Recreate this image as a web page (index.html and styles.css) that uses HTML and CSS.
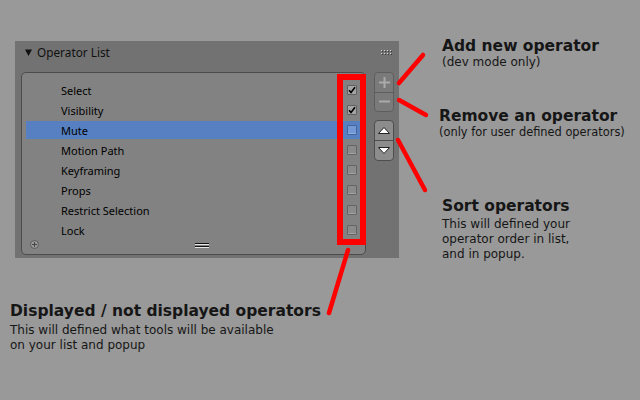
FILE: index.html
```html
<!DOCTYPE html>
<html>
<head>
<meta charset="utf-8">
<link rel="stylesheet" href="styles.css">
</head>
<body>
<div class="canvas">
  <div class="left">
    <section class="panel">
      <header class="panel-head">
        <svg class="tri" width="7" height="7" viewBox="0 0 7 7"><polygon points="0,0.5 7,0.5 3.5,7" fill="#111"/></svg>
        <span class="panel-title">Operator List</span>
        <svg class="grip-dots" width="12" height="5" viewBox="0 0 12 5">
          <g fill="#3a3a3a"><rect x="1" y="1" width="1" height="1"/><rect x="4" y="1" width="1" height="1"/><rect x="7" y="1" width="1" height="1"/><rect x="10" y="1" width="1" height="1"/><rect x="1" y="4" width="1" height="1"/><rect x="4" y="4" width="1" height="1"/><rect x="7" y="4" width="1" height="1"/><rect x="10" y="4" width="1" height="1"/></g>
          <g fill="#d8d8d8"><rect x="0" y="0" width="1" height="1"/><rect x="3" y="0" width="1" height="1"/><rect x="6" y="0" width="1" height="1"/><rect x="9" y="0" width="1" height="1"/><rect x="0" y="3" width="1" height="1"/><rect x="3" y="3" width="1" height="1"/><rect x="6" y="3" width="1" height="1"/><rect x="9" y="3" width="1" height="1"/></g>
        </svg>
      </header>
      <div class="panel-body">
        <div class="list">
          <ul class="rows">
            <li class="row"><span class="label">Select</span><span class="cb checked"><svg width="8" height="8" viewBox="0 0 8 8"><path d="M1 4.2 L3 6.4 L7 1.2" fill="none" stroke="#000" stroke-width="1.6"/></svg></span></li>
            <li class="row"><span class="label">Visibility</span><span class="cb checked"><svg width="8" height="8" viewBox="0 0 8 8"><path d="M1 4.2 L3 6.4 L7 1.2" fill="none" stroke="#000" stroke-width="1.6"/></svg></span></li>
            <li class="row active"><span class="label">Mute</span><span class="cb"></span></li>
            <li class="row"><span class="label">Motion Path</span><span class="cb"></span></li>
            <li class="row"><span class="label">Keyframing</span><span class="cb"></span></li>
            <li class="row"><span class="label">Props</span><span class="cb"></span></li>
            <li class="row"><span class="label">Restrict Selection</span><span class="cb"></span></li>
            <li class="row"><span class="label">Lock</span><span class="cb"></span></li>
          </ul>
          <div class="list-foot">
            <svg class="add-icon" width="9" height="9" viewBox="0 0 9 9"><circle cx="4.5" cy="4.5" r="4" fill="#9a9a9a" stroke="#5c5c5c"/><path d="M4.5 2 V7 M2 4.5 H7" stroke="#444" stroke-width="1"/></svg>
            <svg class="resize-grip" width="14" height="5" viewBox="0 0 14 5"><rect x="0" y="0" width="14" height="1" fill="#111"/><rect x="0" y="1" width="14" height="1" fill="#e6e6e6"/><rect x="0" y="3" width="14" height="1" fill="#111"/><rect x="0" y="4" width="14" height="1" fill="#e6e6e6"/></svg>
          </div>
        </div>
        <div class="side">
          <div class="btn-group flat">
            <div class="btn"><svg width="11" height="11" viewBox="0 0 11 11"><path d="M5.5 0 V11 M0 5.5 H11" stroke="#aaaaaa" stroke-width="2"/></svg></div>
            <div class="btn"><svg width="11" height="11" viewBox="0 0 11 11"><path d="M0 5.5 H11" stroke="#aaaaaa" stroke-width="2"/></svg></div>
          </div>
          <div class="btn-group raised">
            <div class="btn"><svg width="12" height="7" viewBox="0 0 12 7"><polygon points="6,0.5 11.5,6.5 0.5,6.5" fill="#fff" stroke="#222" stroke-width="1"/></svg></div>
            <div class="btn"><svg width="12" height="7" viewBox="0 0 12 7"><polygon points="0.5,0.5 11.5,0.5 6,6.5" fill="#fff" stroke="#222" stroke-width="1"/></svg></div>
          </div>
        </div>
      </div>
    </section>
    <div class="note note-display">
      <div class="note-title">Displayed / not displayed operators</div>
      <div class="note-text">This will defined what tools will be available<br>on your list and popup</div>
    </div>
  </div>
  <div class="right">
    <div class="note note-add">
      <div class="note-title">Add new operator</div>
      <div class="note-text">(dev mode only)</div>
    </div>
    <div class="note note-remove">
      <div class="note-title">Remove an operator</div>
      <div class="note-text">(only for user defined operators)</div>
    </div>
    <div class="note note-sort">
      <div class="note-title">Sort operators</div>
      <div class="note-text">This will defined your<br>operator order in list,<br>and in popup.</div>
    </div>
  </div>
  <svg class="marks" width="640" height="400" viewBox="0 0 640 400">
    <g fill="none" stroke="#ff0000" stroke-linecap="round">
      <rect x="340" y="77" width="23" height="165" stroke-width="6" stroke-linecap="butt"/>
      <path d="M399 83 L423 55" stroke-width="4.5"/>
      <path d="M399 100 L426 115" stroke-width="4.5"/>
      <path d="M398 140 L425 190" stroke-width="4.5"/>
      <path d="M348 250 L329 313" stroke-width="4.5"/>
    </g>
  </svg>
</div>
</body>
</html>
```
FILE: styles.css
```css
html, body {
  margin: 0;
  padding: 0;
  background: #999999;
}

.canvas {
  position: relative;
  width: 640px;
  height: 400px;
  display: flex;
  overflow: hidden;
}

.left {
  padding: 41px 0 0 15px;
  width: 384px;
  flex: none;
}

.panel {
  width: 384px;
  height: 217px;
  background: #727272;
  display: flex;
  flex-direction: column;
}

.panel-head {
  height: 22px;
  display: flex;
  align-items: center;
  padding: 0 6px 0 10px;
  flex: none;
}

.tri {
  display: block;
  margin-right: 5px;
}

.panel-title {
  font-family: "Noto Sans", sans-serif;
  font-size: 11.8px;
  line-height: 22px;
  color: #111;
}

.grip-dots {
  display: block;
  margin-left: auto;
}

.panel-body {
  flex: 1;
  display: flex;
  gap: 8px;
  padding: 9px 5px 3px 6px;
}

.list {
  width: 345px;
  box-sizing: border-box;
  border: 1px solid #4c4c4c;
  border-radius: 5px;
  background: #828282;
  padding: 8px 5px 0 4px;
  display: flex;
  flex-direction: column;
}

.rows {
  list-style: none;
  margin: 0;
  padding: 0;
  display: flex;
  flex-direction: column;
  gap: 2px;
}

.row {
  height: 18px;
  display: flex;
  align-items: center;
  padding: 0 3px 0 35px;
  font-family: "Noto Sans", sans-serif;
  font-size: 11px;
  color: #000;
}

.row.active {
  background: #5680c2;
}

.label {
  flex: 1;
}

.cb {
  width: 10px;
  height: 10px;
  box-sizing: border-box;
  border: 1px solid #646464;
  border-radius: 1px;
  background: #8a8a8a;
  box-shadow: inset 0 -1px 0 #a3a3a3;
  display: flex;
  align-items: center;
  justify-content: center;
}

.cb svg {
  display: block;
}

.cb.checked {
  background: #a4a4a4;
  border-color: #606060;
  box-shadow: none;
}

.row.active .cb {
  background: #7398d6;
  border-color: #45649a;
  box-shadow: inset 0 -1px 0 #8eaee2;
}

.list-foot {
  display: flex;
  align-items: flex-start;
  padding: 1px 0 0 4px;
}

.add-icon {
  display: block;
}

.resize-grip {
  display: block;
  margin: 3px 0 0 156px;
}

.side {
  width: 20px;
  display: flex;
  flex-direction: column;
  gap: 8px;
}

.btn-group {
  box-sizing: border-box;
  border-radius: 4px;
  display: flex;
  flex-direction: column;
  overflow: hidden;
}

.btn-group.flat {
  height: 40px;
  border: 1px solid #5e5e5e;
  background: #7a7a7a;
}

.btn-group.raised {
  height: 41px;
  border: 1px solid #4e4e4e;
  background: #8c8c8c;
}

.btn {
  flex: 1;
  display: flex;
  align-items: center;
  justify-content: center;
}

.btn svg {
  display: block;
}

.flat .btn + .btn {
  border-top: 1px solid #5e5e5e;
}

.raised .btn + .btn {
  border-top: 1px solid #4e4e4e;
}

.right {
  padding-left: 39px;
  flex: 1;
}

.note {
  font-family: "DejaVu Sans", sans-serif;
  color: #161616;
}

.note-title {
  font-size: 15.5px;
  font-weight: bold;
  line-height: 17px;
  white-space: nowrap;
}

.note-text {
  font-size: 12px;
  line-height: 15px;
  white-space: nowrap;
}

.note-add {
  margin-top: 38px;
  padding-left: 4px;
}

.note-remove {
  margin-top: 38px;
  padding-left: 1px;
}

.note-remove .note-text {
  font-size: 11.4px;
}

.note-sort {
  margin-top: 58px;
  padding-left: 4px;
}

.note-sort .note-text {
  margin-top: 2px;
}

.note-display {
  margin: 45px 0 0 -5px;
}

.note-display .note-text {
  margin-top: 3px;
}

.marks {
  position: absolute;
  left: 0;
  top: 0;
  pointer-events: none;
}
```
